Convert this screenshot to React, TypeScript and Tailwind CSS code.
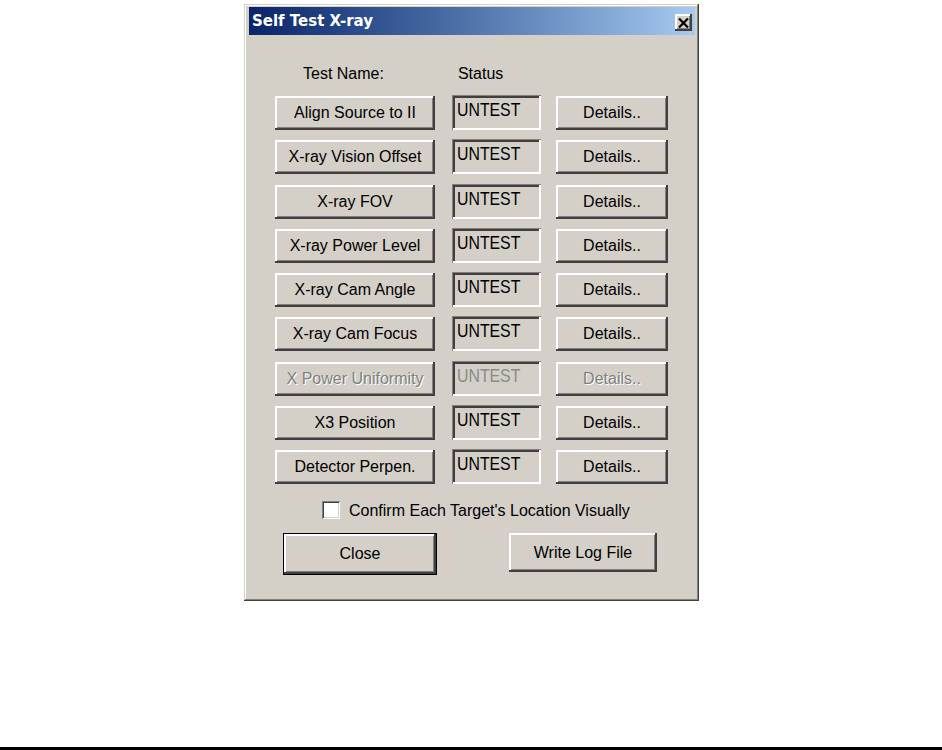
const tests = [
  { name: "Align Source to II" },
  { name: "X-ray Vision Offset" },
  { name: "X-ray FOV" },
  { name: "X-ray Power Level" },
  { name: "X-ray Cam Angle" },
  { name: "X-ray Cam Focus" },
  { name: "X Power Uniformity", disabled: true },
  { name: "X3 Position" },
  { name: "Detector Perpen." },
];

// classic raised / sunken 3D edges
const raised =
  "bg-[#d4d0c8] shadow-[inset_-2px_-2px_0_#404040,inset_2px_2px_0_#ffffff,inset_-3px_-3px_0_#808080]";
const sunken =
  "bg-[#d4d0c8] shadow-[inset_1px_1px_0_#808080,inset_-2px_-2px_0_#ffffff,inset_3px_3px_0_#404040]";
const disabledText = "text-[#808080] [text-shadow:1px_1px_0_#ffffff]";

function TestRow({ name, disabled }: { name: string; disabled?: boolean }) {
  return (
    <div className="flex h-[35px] items-start">
      <div
        className={`${raised} mt-px flex h-[34px] w-[160px] items-center justify-center ${
          disabled ? disabledText : "text-black"
        }`}
      >
        {name}
      </div>
      <div
        className={`${sunken} ml-[17px] h-[35px] w-[89px] pl-[5px] pt-[5px] ${
          disabled ? "text-[#8a8a8a]" : "text-black"
        }`}
      >
        <span className="inline-block origin-left scale-x-[0.88] text-[18px] leading-[20px]">
          UNTEST
        </span>
      </div>
      <div
        className={`${raised} ml-[15px] mt-px flex h-[34px] w-[112px] items-center justify-center ${
          disabled ? disabledText : "text-black"
        }`}
      >
        Details..
      </div>
    </div>
  );
}

export default function App() {
  return (
    <div className="flex h-[750px] flex-col bg-white font-['Liberation_Sans',Arial,sans-serif] text-[16px] leading-[18px]">
      <div className="pl-[244px] pt-[4px]">
        {/* window */}
        <div className="h-[597px] w-[455px] bg-[#d4d0c8] pl-[5px] pr-[4px] pt-[3px] shadow-[inset_-1px_-1px_0_#404040,inset_1px_1px_0_#d4d0c8,inset_-2px_-2px_0_#808080,inset_2px_2px_0_#ffffff]">
          {/* title bar */}
          <div className="flex h-[28px] items-center bg-gradient-to-r from-[#0a246a] to-[#a6caf0] pl-[3px] pr-[3px]">
            <span className="font-['DejaVu_Sans',sans-serif] text-[15px] font-bold leading-[18px] text-white">
              Self Test X-ray
            </span>
            <div
              className={`${raised} ml-auto mt-[3px] flex h-[17px] w-[17px] items-center justify-center`}
            >
              <svg width="11" height="10" viewBox="0 0 11 10">
                <path d="M1 0.5 L10 9.5 M10 0.5 L1 9.5" stroke="#000" strokeWidth="2.2" />
              </svg>
            </div>
          </div>

          {/* column headings */}
          <div className="mt-[30px] flex h-[18px] text-black">
            <span className="ml-[54px]">Test Name:</span>
            <span className="ml-[74px]">Status</span>
          </div>

          {/* test rows */}
          <div className="ml-[26px] mt-[12px] flex flex-col gap-[9.25px]">
            {tests.map((t) => (
              <TestRow key={t.name} name={t.name} disabled={t.disabled} />
            ))}
          </div>

          {/* checkbox */}
          <div className="ml-[73px] mt-[17px] flex h-[18px] items-center text-black">
            <div className="h-[18px] w-[18px] bg-white shadow-[inset_1px_1px_0_#808080,inset_-1px_-1px_0_#ffffff,inset_2px_2px_0_#404040,inset_-2px_-2px_0_#d4d0c8]" />
            <span className="ml-[9px] pt-[2px]">Confirm Each Target's Location Visually</span>
          </div>

          {/* bottom buttons */}
          <div className="mt-[14px] flex items-start text-black">
            <div className="ml-[34px] h-[42px] w-[154px] border border-black">
              <div className={`${raised} flex h-full w-full items-center justify-center`}>
                Close
              </div>
            </div>
            <div
              className={`${raised} ml-[72px] flex h-[39px] w-[148px] items-center justify-center`}
            >
              Write Log File
            </div>
          </div>
        </div>
      </div>
      <div className="mt-auto h-[3px] bg-black" />
    </div>
  );
}
